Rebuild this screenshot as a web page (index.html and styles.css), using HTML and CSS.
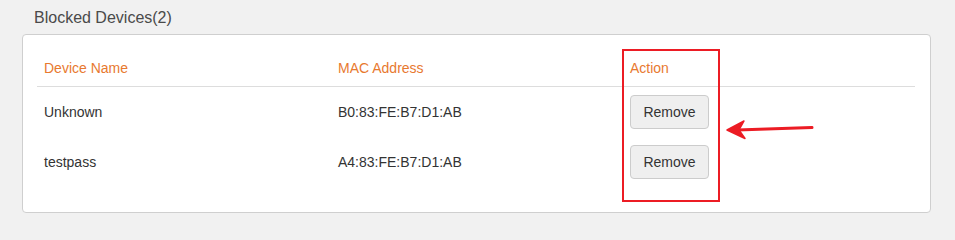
FILE: index.html
```html
<!DOCTYPE html>
<html lang="en">
<head>
<meta charset="utf-8">
<title>Blocked Devices</title>
<link rel="stylesheet" href="styles.css">
</head>
<body>
<div class="page">
  <h2 class="title">Blocked Devices(2)</h2>
  <div class="card">
    <div class="table">
      <div class="row head">
        <div class="cell">Device Name</div>
        <div class="cell">MAC Address</div>
        <div class="cell">Action</div>
      </div>
      <div class="row">
        <div class="cell">Unknown</div>
        <div class="cell">B0:83:FE:B7:D1:AB</div>
        <div class="cell"><button class="btn">Remove</button></div>
      </div>
      <div class="row">
        <div class="cell">testpass</div>
        <div class="cell">A4:83:FE:B7:D1:AB</div>
        <div class="cell"><button class="btn">Remove</button></div>
      </div>
    </div>
  </div>
  <div class="highlight"></div>
  <svg class="arrow" width="100" height="30" viewBox="722 115 100 30" xmlns="http://www.w3.org/2000/svg">
    <path d="M737 130 L812 127.5" stroke="#ec1c24" stroke-width="3" stroke-linecap="round" fill="none"/>
    <path d="M727 130 L744 121 L739 130 L745 138.5 Z" fill="#ec1c24" stroke="#ec1c24" stroke-width="1.5" stroke-linejoin="round"/>
  </svg>
</div>
</body>
</html>
```

FILE: styles.css
```css
html, body {
  margin: 0;
  padding: 0;
  background: #f1f1f1;
  height: 223px;
  overflow: hidden;
}

body {
  font-family: "Liberation Sans", Arial, sans-serif;
  font-size: 14px;
  line-height: 20px;
  color: #333;
}

.page {
  position: relative;
  width: 955px;
  height: 223px;
  padding-top: 8px;
  box-sizing: border-box;
  overflow: hidden;
}

.title {
  margin: 0 0 6px 34px;
  font-size: 16px;
  font-weight: normal;
  line-height: 20px;
  color: #4a4a4a;
}

.card {
  margin-left: 22px;
  width: 909px;
  box-sizing: border-box;
  background: #fff;
  border: 1px solid #cfcfcf;
  border-radius: 4px;
  padding: 15px 15px 25px 14px;
}

.table {
  width: 878px;
}

.row {
  display: grid;
  grid-template-columns: 294px 292px 1fr;
}

.row.head {
  border-bottom: 1px solid #dddddd;
}

.cell {
  padding: 8px 7px;
  line-height: 20px;
  white-space: nowrap;
}

.row:not(.head) .cell {
  padding-top: 15px;
  padding-bottom: 15px;
}

.row:not(.head) .cell:last-child {
  padding-top: 8px;
  padding-bottom: 8px;
}

.head .cell {
  color: #e8792f;
}

.btn {
  display: block;
  font-family: "Liberation Sans", Arial, sans-serif;
  font-size: 14px;
  line-height: 20px;
  color: #333;
  background: #efefef;
  border: 1px solid #cccccc;
  border-radius: 4px;
  padding: 6px 12px;
  height: 34px;
  width: 79px;
  cursor: pointer;
}

.highlight {
  position: absolute;
  left: 622px;
  top: 49px;
  width: 98px;
  height: 153px;
  box-sizing: border-box;
  border: 2.5px solid #ec1c24;
}

.arrow {
  position: absolute;
  left: 722px;
  top: 115px;
}
```
